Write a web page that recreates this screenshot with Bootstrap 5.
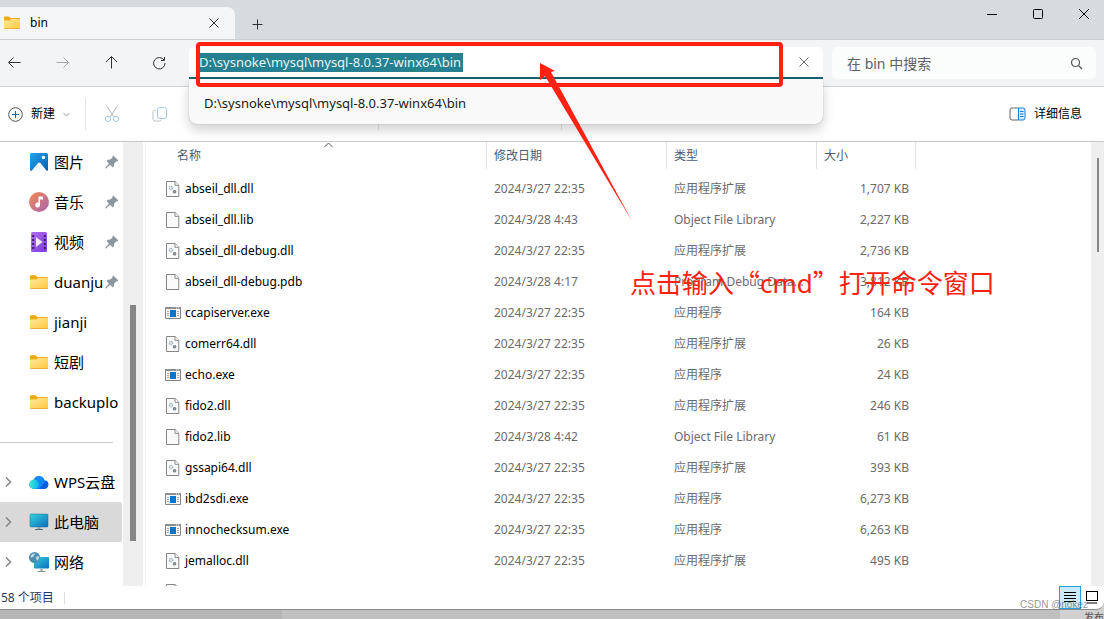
<!DOCTYPE html>
<html lang="zh-CN">
<head>
<meta charset="utf-8">
<meta name="viewport" content="width=device-width, initial-scale=1">
<title>bin</title>
<link href="https://cdn.jsdelivr.net/npm/bootstrap@5.3.0/dist/css/bootstrap.min.css" rel="stylesheet">
<style>
  body { font: 12px/16px "Noto Sans", "Noto Sans CJK SC", sans-serif; background: #bbb; color: #000; }
  svg { display: block; flex: none; }
  button { background: none; border: 0; padding: 0; color: inherit; }
  .desktop { height: 100vh; background: linear-gradient(90deg, #b6b6b6 0 282px, #c0c0c0 282px 1060px, #d0d0d0 1060px); }
  .explorer { background: #fff; border-bottom: 1px solid #8c8c8c; border-radius: 0 0 8px 0; min-height: 0; }
  .explorer > * { flex-shrink: 0; }
  .beneath { height: 9px; color: #555; line-height: 14px; font-size: 10px; }

  .titlebar { height: 40px; background: #d5dbde; border-bottom: 1px solid #c8d0d5; }
  .tab-bin { width: 235px; height: 32px; background: #f3f5f7; border-radius: 0 8px 0 0; padding-right: 14px; padding-left: 4px; }
  .tab-bin .tab-name { margin-left: 10px; }
  .win-btns { gap: 34px; padding-right: 14px; height: 28px; }

  .toolbar-nav { height: 47px; background: #f3f4f6; border-bottom: 1px solid #cfd2d4; padding-right: 8px; }
  .nav-btns { width: 189px; padding: 0 22px 0 6px; color: #333; }
  .nav-btns button { width: 16px; height: 16px; }
  .address { width: 634px; }
  .address-box { height: 32px; background: #fff; border-bottom: 2px solid #186474; border-radius: 5px 5px 0 0; padding: 0 12px 0 10px; }
  .address input, .search input { border: 0; outline: 0; background: transparent; min-width: 0; padding: 0; font-size: 14px; line-height: 19px; }
  .address input { background: linear-gradient(#258091, #258091) no-repeat 0 0 / 264px 19px; color: #e6f4f5; height: 19px; font-size: 13px; }
  .suggest { top: 32px; left: 0; right: 0; height: 45px; background: #f9f9f9; border-radius: 0 0 8px 8px; box-shadow: 0 6px 12px rgba(0,0,0,.18), 0 0 1px rgba(0,0,0,.4); z-index: 3; }
  .suggest button { font-size: 13px; line-height: 20px; padding: 2px 15px 0; color: #1b1b1b; }
  .search { height: 32px; background: #fbfdfc; border-radius: 5px; padding: 0 13px 0 15px; margin-left: 9px; }
  .search input::placeholder { color: #606060; opacity: 1; }

  .commands { height: 55px; border-bottom: 1px solid #c8c8c8; padding: 0 22px 0 8px; }
  .commands .rule { width: 1px; height: 32px; background: #e4e4e4; }
  .rule-a { margin-left: 15px; }
  .rule-b { margin-left: 208px; }
  .rule-c { margin-left: 182px; }

  .content { flex: 1 1 0; min-height: 0; }
  .side { width: 146px; border-right: 1px solid #f2f2f2; }
  .side-list { width: 123px; font-size: 15px; line-height: 20px; overflow: hidden; }
  .side-item { height: 40px; padding: 0 3px; text-decoration: none; color: #000; width: 122px; border-radius: 0 2px 2px 0; white-space: nowrap; }
  .side-item.current { background: #d9d9d9; }
  .side-item .chev { width: 10px; flex: none; margin-right: 16px; }
  .side-item .ico { width: 20px; flex: none; margin-right: 5px; }
  .side-item .pin { margin-left: auto; }
  .side-rule { margin: 20px 10px 19px 0; border-top: 1px solid #cfcfcf; }
  .track { width: 20px; background: #efefef; }
  .side .track { padding-bottom: 45px; }
  .thumb { width: 6px; height: 236px; background: #858585; }

  .files { table-layout: fixed; width: 770px; border-collapse: separate; border-spacing: 0; }
  .files th { height: 27px; font-weight: 400; color: #4a5b73; padding: 0 7px; border-right: 1px solid #e2e2e2; vertical-align: middle; }
  .files th:first-child { padding-left: 31px; }
  .files tbody::before { content: ""; display: table-row; height: 4px; }
  .files td { height: 31px; padding: 0 7px; color: #6b6b6b; vertical-align: middle; white-space: nowrap; overflow: hidden; }
  .files td:first-child { color: #000; padding-left: 19px; }
  .files td:last-child { text-align: right; }
  .file-ico { width: 16px; margin-right: 4px; }
  .sort { top: 0; left: 178px; }
  .page-track { width: 13px; }
  .page-thumb { width: 2px; height: 94px; background: #858585; }

  .status { height: 23px; color: #1f3a66; padding: 0 5px 0 1px; }
  .status .rule { width: 1px; height: 12px; background: #ddd; margin-left: 10px; }
  .view-on { width: 22px; height: 23px; background: #cde8f6; border: 1px solid #26a0da; }
  .watermark { right: 16px; bottom: -3px; font: 10px/14px "Liberation Sans", sans-serif; color: rgba(90,90,90,.65); z-index: 5; }

  .mark-box { left: 7px; top: -5px; width: 587px; height: 45px; border: 4px solid #ff2213; border-radius: 4px; z-index: 4; pointer-events: none; }
  .mark-arrow { left: 351px; top: 16px; z-index: 5; pointer-events: none; }
  .mark-note { left: 484px; top: 121px; font-size: 26px; line-height: 38px; color: #ff2213; white-space: nowrap; z-index: 4; }
  .mark-note .quote { font-family: "Noto Sans CJK SC", sans-serif; }
</style>
</head>
<body>
<svg width="0" height="0" class="position-absolute" aria-hidden="true">
  <defs>
    <linearGradient id="gFolder" x1="0" y1="0" x2="1" y2="1"><stop offset="0" stop-color="#ffe9a0"/><stop offset="1" stop-color="#ffc93c"/></linearGradient>
    <linearGradient id="gPic" x1="0" y1="0" x2="1" y2="1"><stop offset="0" stop-color="#22a6ee"/><stop offset="1" stop-color="#0a5dab"/></linearGradient>
    <linearGradient id="gMusic" x1="0" y1="0" x2="1" y2="1"><stop offset="0" stop-color="#f58a4e"/><stop offset="1" stop-color="#a663b4"/></linearGradient>
    <linearGradient id="gVideo" x1="0" y1="0" x2="1" y2="1"><stop offset="0" stop-color="#b56cf5"/><stop offset="1" stop-color="#7b3bdc"/></linearGradient>
    <linearGradient id="gPc" x1="0" y1="0" x2="1" y2="1"><stop offset="0" stop-color="#35d3dd"/><stop offset="1" stop-color="#0b6cbd"/></linearGradient>
    <linearGradient id="gCloud" x1="0" y1="0" x2="1" y2="0"><stop offset="0" stop-color="#37ecd0"/><stop offset="1" stop-color="#12b0f3"/></linearGradient>
    <symbol id="folder" viewBox="0 0 18 15"><path d="M0 1.2Q0 .3 1 .3h4.6L7.6 2H17q1 0 1 1v4H0z" fill="#f4ab1b"/><path d="M0 4.6h6.2L8 3h9q1 0 1 1v9q0 1-1 1H1q-1 0-1-1z" fill="url(#gFolder)"/><path d="M0 13.2q.2.8 1 .8h16q.8 0 1-.8z" fill="#e8a02e"/></symbol>
    <symbol id="pin" viewBox="0 0 14 14"><path d="M8.2.4l5.2 5-1.2 1.1-.8-.2-2.3 2.4-.1 2.6-1.3 1.2L5 9.8 1.2 13.6.3 13.3.4 12.6 4 8.8 1.5 6l1.2-1.2 2.7-.2L7.6 2.2l-.3-.8z" fill="#8b969e"/></symbol>
    <symbol id="chev" viewBox="0 0 10 12"><path d="M3 1.5L7.5 6 3 10.5" fill="none" stroke="#858585" stroke-width="1.5"/></symbol>
    <symbol id="dll" viewBox="0 0 16 16"><path d="M1.5.5h8.7l3.6 3.6v11.4H1.5z" fill="#fafafa" stroke="#868686"/><path d="M10 .5V4.3H13.8" fill="#fff" stroke="#868686"/><circle cx="6" cy="7" r="1.700" fill="#dbe5ec" stroke="#a3b2be" stroke-width="1.200" stroke-dasharray="1.200 .6"/><circle cx="9.600" cy="10.800" r="1.200" fill="#aaa" stroke="#7a848c" stroke-width="1.200"/></symbol>
    <symbol id="doc" viewBox="0 0 16 16"><path d="M1.5.5h8.7l3.6 3.6v11.4H1.5z" fill="#fafafa" stroke="#868686"/><path d="M10 .5V4.3H13.8" fill="#fff" stroke="#868686"/></symbol>
    <symbol id="exe" viewBox="0 0 16 16"><path d="M.5 2.5h15v11H.5z" fill="#f5f5f5" stroke="#858585"/><path d="M0 2h16v2H0z" fill="#8e8e8e"/><path d="M11 3h1m1 0h1" stroke="#fff"/><path d="M5 5h6v7H5z" fill="#0b75cc"/><path d="M2 6.500h2M2 8.500h2M2 10.500h2M12 6.500h2M12 8.500h2M12 10.500h2" stroke="#aaa"/></symbol>
  </defs>
</svg>

<div class="desktop d-flex flex-column overflow-hidden">
  <main class="explorer d-flex flex-column flex-grow-1 position-relative">
    <header class="titlebar d-flex">
      <div class="tab-bin d-flex align-items-center align-self-end">
        <svg width="16" height="14"><use href="#folder"/></svg>
        <span class="tab-name flex-grow-1">bin</span>
        <button type="button" aria-label="关闭标签页"><svg width="14" height="14" viewBox="0 0 14 14" stroke="#333"><path d="M2.500 2.500l9 9M11.500 2.500l-9 9"/></svg></button>
      </div>
      <button type="button" class="ms-3 mt-2" aria-label="新建标签页"><svg width="14" height="14" viewBox="0 0 14 14" stroke="#333"><path d="M1.500 7.500h10M6.500 2.500v10"/></svg></button>
      <div class="win-btns d-flex align-items-center ms-auto">
        <button type="button" aria-label="最小化"><svg width="12" height="12" viewBox="0 0 12 12" stroke="#000"><path d="M1 6.500h10"/></svg></button>
        <button type="button" aria-label="最大化"><svg width="12" height="12" viewBox="0 0 12 12" fill="none" stroke="#000"><rect x="1.500" y="1.500" width="9" height="9" rx="1"/></svg></button>
        <button type="button" aria-label="关闭"><svg width="12" height="12" viewBox="0 0 12 12" stroke="#000"><path d="M1 1l10 10M11 1L1 11"/></svg></button>
      </div>
    </header>

    <div class="toolbar-nav d-flex align-items-center">
      <nav class="nav-btns d-flex justify-content-between">
        <button type="button" aria-label="后退"><svg width="16" height="16" viewBox="0 0 16 16" fill="none" stroke="currentColor"><path d="M14.500 7.500H2.500M7.500 2.500l-5 5 5 5"/></svg></button>
        <button type="button" aria-label="前进" disabled><svg width="16" height="16" viewBox="0 0 16 16" fill="none" stroke="#a6a6a6"><path d="M2.500 7.500h12M9.500 2.500l5 5-5 5"/></svg></button>
        <button type="button" aria-label="向上"><svg width="16" height="16" viewBox="0 0 16 16" fill="none" stroke="currentColor"><path d="M8.500 13.500v-12M3 7l5.500-5.500L14 7"/></svg></button>
        <button type="button" aria-label="刷新"><svg width="16" height="16" viewBox="0 0 16 16" fill="none" stroke="currentColor"><path d="M13 5A5.700 5.700 0 1 0 14 8M13.500 2v3.500H10"/></svg></button>
      </nav>
      <div class="address position-relative">
        <div class="address-box d-flex align-items-center">
          <input class="flex-grow-1" type="text" value="D:\sysnoke\mysql\mysql-8.0.37-winx64\bin" aria-label="地址">
          <button type="button" aria-label="清除"><svg width="14" height="14" viewBox="0 0 14 14" stroke="#666"><path d="M2.500 2.500l9 9M11.500 2.500l-9 9"/></svg></button>
        </div>
        <div class="suggest position-absolute d-flex align-items-center"><button type="button">D:\sysnoke\mysql\mysql-8.0.37-winx64\bin</button></div>
        <div class="mark-box position-absolute"></div>
        <svg class="mark-arrow position-absolute" width="94" height="160" viewBox="0 0 94 160"><path d="M0 0l15 8-4 1 81 149L5 13l-5 4z" fill="#ff2213"/></svg>
      </div>
      <div class="search d-flex align-items-center flex-grow-1">
        <input class="flex-grow-1" type="text" placeholder="在 bin 中搜索" aria-label="搜索">
        <svg width="13" height="13" viewBox="0 0 13 13" fill="none" stroke="#555" stroke-width="1.200"><circle cx="5.500" cy="5.500" r="4"/><path d="M8.500 8.500L12 12"/></svg>
      </div>
    </div>

    <div class="commands d-flex align-items-center">
      <button type="button" class="d-flex align-items-center">
        <svg width="15" height="15" viewBox="0 0 15 15" fill="none"><circle cx="7.500" cy="7.500" r="6.800" stroke="#555"/><path d="M4 7.500h7M7.500 4v7" stroke="#0b6cbd"/></svg>
        <span class="ms-2">新建</span>
        <svg class="ms-2" width="7" height="7" viewBox="0 0 7 7" fill="none" stroke="#999"><path d="M.5 2l3 3 3-3"/></svg>
      </button>
      <span class="rule rule-a"></span>
      <button type="button" class="ms-3" disabled aria-label="剪切"><svg width="20" height="18" viewBox="0 0 20 18" fill="none"><path d="M5 1.500l7 10.500M15 1.500L8 12" stroke="#b5b5b5"/><circle cx="6" cy="14" r="2.600" stroke="#9ccbee"/><circle cx="14" cy="14" r="2.600" stroke="#9ccbee"/></svg></button>
      <button type="button" class="ms-4 ps-1" disabled aria-label="复制"><svg width="20" height="18" viewBox="0 0 20 18" fill="none"><path d="M5.500 5H4.500Q3 5 3 6.500V14q0 2 2 2h4.500q1.500 0 1.500-1.500" stroke="#c0c0c0"/><rect x="7.500" y="2.500" width="9" height="11" rx="2" stroke="#9ccbee"/></svg></button>
      <span class="rule rule-b"></span>
      <span class="rule rule-c"></span>
      <button type="button" class="d-flex align-items-center ms-auto">
        <svg width="17" height="14" viewBox="0 0 17 14" fill="none"><path d="M9.500 1H3Q1 1 1 3v8q0 2 2 2h6.500" stroke="#666"/><path d="M9.500 1H14q2 0 2 2v8q0 2-2 2H9.500z" fill="#d7ecfb" stroke="#1a7fd0"/><path d="M11 4.500h3.500M11 7h3.500M11 9.500h3.500" stroke="#1a7fd0"/></svg>
        <span class="ms-2">详细信息</span>
      </button>
    </div>

    <div class="content d-flex overflow-hidden">
      <aside class="side d-flex flex-shrink-0">
        <nav class="side-list" id="side"></nav>
        <div class="track d-flex justify-content-center align-items-end"><div class="thumb"></div></div>
      </aside>
      <section class="flex-grow-1 position-relative overflow-hidden">
        <svg class="sort position-absolute" width="9" height="6" viewBox="0 0 9 6" fill="none" stroke="#555"><path d="M.5 5l4-4 4 4"/></svg>
        <table class="files">
          <colgroup><col style="width:341px"><col style="width:180px"><col style="width:150px"><col></colgroup>
          <thead><tr><th>名称</th><th>修改日期</th><th>类型</th><th>大小</th></tr></thead>
          <tbody id="rows"></tbody>
        </table>
        <div class="mark-note position-absolute">点击输入<span class="quote">“</span>cmd<span class="quote">”</span>打开命令窗口</div>
      </section>
      <div class="track page-track d-flex justify-content-center pt-3"><div class="page-thumb"></div></div>
    </div>

    <footer class="status d-flex align-items-center">
      <span>58 个项目</span><span class="rule"></span>
      <button type="button" class="view-on ms-auto d-flex align-items-center justify-content-center" aria-label="详细信息视图"><svg width="12" height="11" viewBox="0 0 12 11" stroke="#000"><path d="M0 .5h12M0 3.500h12M0 6.500h12M0 9.500h12"/></svg></button>
      <button type="button" class="ms-1" aria-label="大图标视图"><svg width="14" height="13" viewBox="0 0 14 13" fill="none" stroke="#000"><rect x="1.500" y=".5" width="11" height="9"/><path d="M2 12h10"/></svg></button>
    </footer>
    <div class="watermark position-absolute">CSDN @nokez</div>
  </main>
  <div class="beneath overflow-hidden text-end flex-shrink-0">发布</div>
</div>

<script>
const art = {
  pic: '<svg width="20" height="20" viewBox="0 0 20 20"><rect x="1" y="1" width="18" height="18" rx="1.500" fill="url(#gPic)"/><path d="M2.500 19l6.500-8q1.200-1 2.400 0l6.500 8z" fill="#f2faff"/><circle cx="14.500" cy="5.500" r="1.700" fill="#fff"/></svg>',
  music: '<svg width="20" height="20" viewBox="0 0 20 20"><circle cx="10" cy="10" r="10" fill="url(#gMusic)"/><path d="M9.500 4.500h4.500v3h-3v5.500a2.400 2.400 0 1 1-1.500-2.200z" fill="#fff"/></svg>',
  video: '<svg width="20" height="20" viewBox="0 0 20 20"><rect x="2" width="16" height="20" rx="1.500" fill="url(#gVideo)"/><path d="M7 5l6.500 5L7 15z" fill="#f3eaff"/><path d="M4.200 3v15M15.800 3v15" stroke="#3c2170" stroke-width="2" stroke-dasharray="2 2"/></svg>',
  folder: '<svg width="20" height="15"><use href="#folder"/></svg>',
  cloud: '<svg width="20" height="20" viewBox="0 0 20 20"><path d="M5 17a4.500 4.500 0 0 1-.5-9A5.800 5.800 0 0 1 15.500 8 4.600 4.600 0 0 1 15 17z" fill="#1188f5"/><path d="M10 17l7-8.500A4.500 4.500 0 0 1 15 17z" fill="#0a5ee0"/><circle cx="5.200" cy="12.300" r="4.700" fill="url(#gCloud)"/></svg>',
  pc: '<svg width="20" height="20" viewBox="0 0 20 20"><rect x="1" y="2" width="18" height="13" rx="1" fill="url(#gPc)" stroke="#2a6d8f" stroke-width=".5"/><path d="M8.500 15h3v2h-3z" fill="#8da0ab"/><path d="M6 17.500h8" stroke="#5b6b75"/></svg>',
  net: '<svg width="20" height="20" viewBox="0 0 20 20"><rect x="5" y="5" width="15" height="11.500" rx="1" fill="url(#gPc)"/><path d="M11.500 16.500h2v2.500h-2z" fill="#8da0ab"/><path d="M8.500 19.500h8" stroke="#8795a0"/><circle cx="5.500" cy="5.500" r="5.500" fill="#4f8db0"/><path d="M1.500 4Q3 .8 6 1.200L5 4 2.500 6zM6.500 5l3-1 .8 2-2.300 3z" fill="#b9d8e6"/></svg>'
};
const side = [['pic','图片',1],['music','音乐',1],['video','视频',1],['folder','duanju',1],['folder','jianji'],['folder','短剧'],['folder','backuplo'],null,
  ['cloud','WPS云盘',0,1],['pc','此电脑',0,1,1],['net','网络',0,1]];
document.getElementById('side').innerHTML = side.map(s => !s ? '<div class="side-rule"></div>' :
  `<a href="#" class="side-item d-flex align-items-center${s[4] ? ' current' : ''}"><span class="chev">${s[3] ? '<svg width="10" height="12"><use href="#chev"/></svg>' : ''}</span><span class="ico">${art[s[0]]}</span><span>${s[1]}</span>${s[2] ? '<svg class="pin" width="14" height="14"><use href="#pin"/></svg>' : ''}</a>`).join('');

const kinds = { dll: '应用程序扩展', lib: 'Object File Library', pdb: 'Program Debug Data...', exe: '应用程序' };
const files = [['abseil_dll.dll','27 22:35','1,707'],['abseil_dll.lib','28 4:43','2,227'],['abseil_dll-debug.dll','27 22:35','2,736'],
  ['abseil_dll-debug.pdb','28 4:17','3,812'],['ccapiserver.exe','27 22:35','164'],['comerr64.dll','27 22:35','26'],['echo.exe','27 22:35','24'],
  ['fido2.dll','27 22:35','246'],['fido2.lib','28 4:42','61'],['gssapi64.dll','27 22:35','393'],['ibd2sdi.exe','27 22:35','6,273'],
  ['innochecksum.exe','27 22:35','6,263'],['jemalloc.dll','27 22:35','495']];
const icon = e => `<svg class="file-ico" width="16" height="16"><use href="#${e === 'dll' || e === 'exe' ? e : 'doc'}"/></svg>`;
document.getElementById('rows').innerHTML = files.map(([n, d, s]) => {
  const e = n.split('.').pop();
  return `<tr><td><span class="d-flex align-items-center">${icon(e)}${n}</span></td><td>2024/3/${d}</td><td>${kinds[e]}</td><td>${s} KB</td></tr>`;
}).join('') + `<tr><td><span class="d-flex">${icon('dll')}</span></td><td></td><td></td><td></td></tr>`;
</script>
<script src="https://cdn.jsdelivr.net/npm/bootstrap@5.3.0/dist/js/bootstrap.bundle.min.js"></script>
</body>
</html>
